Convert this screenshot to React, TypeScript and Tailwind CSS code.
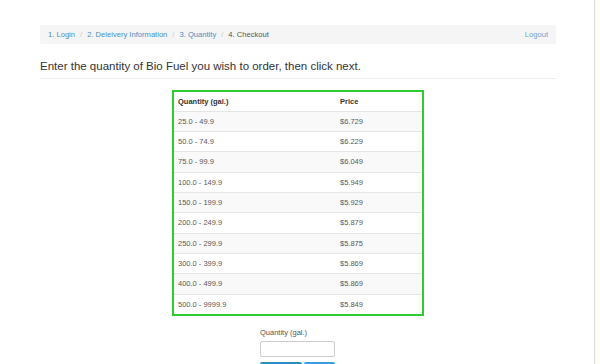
import React from "react";

const rows: [string, string][] = [
  ["25.0 - 49.9", "$6.729"],
  ["50.0 - 74.9", "$6.229"],
  ["75.0 - 99.9", "$6.049"],
  ["100.0 - 149.9", "$5.949"],
  ["150.0 - 199.9", "$5.929"],
  ["200.0 - 249.9", "$5.879"],
  ["250.0 - 299.9", "$5.875"],
  ["300.0 - 399.9", "$5.869"],
  ["400.0 - 499.9", "$5.869"],
  ["500.0 - 9999.9", "$5.849"],
];

export default function App() {
  return (
    <div className="w-[600px] h-[364px] overflow-hidden bg-white flex font-['Liberation_Sans',Arial,sans-serif]">
      <div className="w-[595px] shrink-0 border-r border-[#dcdcd6]">
        <div className="ml-[40px] w-[516px] pt-[25px]">
          {/* Breadcrumb */}
          <div className="h-[19px] bg-[#f5f5f5] rounded-[2px] flex items-center justify-between px-[8px] text-[7.6px]">
            <div className="flex items-center">
              <span className="text-[#4a8fc7]">1. Login</span>
              <span className="text-[#ccc] px-[5px]">/</span>
              <span className="text-[#4a8fc7]">2. Deleivery Information</span>
              <span className="text-[#ccc] px-[5px]">/</span>
              <span className="text-[#4a8fc7]">3. Quantity</span>
              <span className="text-[#ccc] px-[5px]">/</span>
              <span className="text-[#555]">4. Checkout</span>
            </div>
            <span className="text-[#6fa3cf]">Logout</span>
          </div>

          {/* Heading */}
          <h1 className="mt-[15px] text-[11.5px] leading-[14px] text-[#333] pb-[5px] border-b border-[#eee]">
            Enter the quantity of Bio Fuel you wish to order, then click next.
          </h1>

          {/* Price table */}
          <div className="mx-auto mt-[11px] w-[252px] border-2 border-[#2ecc2e]">
            <table className="w-full border-collapse text-[7.5px] text-[#585858]">
              <thead>
                <tr className="h-[19px] border-b border-[#e4e4e4]">
                  <th className="text-left font-bold text-[#333] pl-[4px] w-[166px]">Quantity (gal.)</th>
                  <th className="text-left font-bold text-[#333]">Price</th>
                </tr>
              </thead>
              <tbody>
                {rows.map(([q, p], i) => (
                  <tr
                    key={q}
                    className={`h-[20.35px] ${i < rows.length - 1 ? "border-b border-[#e6e6e6]" : ""} ${i % 2 === 0 ? "bg-[#f9f9f9]" : "bg-white"}`}
                  >
                    <td className="pl-[4px]">{q}</td>
                    <td>{p}</td>
                  </tr>
                ))}
              </tbody>
            </table>
          </div>

          {/* Quantity form */}
          <div className="mx-auto mt-[12px] w-[76px]">
            <div className="text-[7.5px] leading-[9px] text-[#555]">Quantity (gal.)</div>
            <div className="mt-[4px] h-[16px] w-[75px] border border-[#ccc] rounded-[2px] bg-white"></div>
            <div className="mt-[5px] flex gap-[2px]">
              <div className="h-[10px] w-[42px] bg-[#2a8fbf] rounded-[2px]"></div>
              <div className="h-[10px] w-[31px] bg-[#3a9fd6] rounded-[2px]"></div>
            </div>
          </div>
        </div>
      </div>
      <div className="flex-1 bg-[#fdfdf6]"></div>
    </div>
  );
}
